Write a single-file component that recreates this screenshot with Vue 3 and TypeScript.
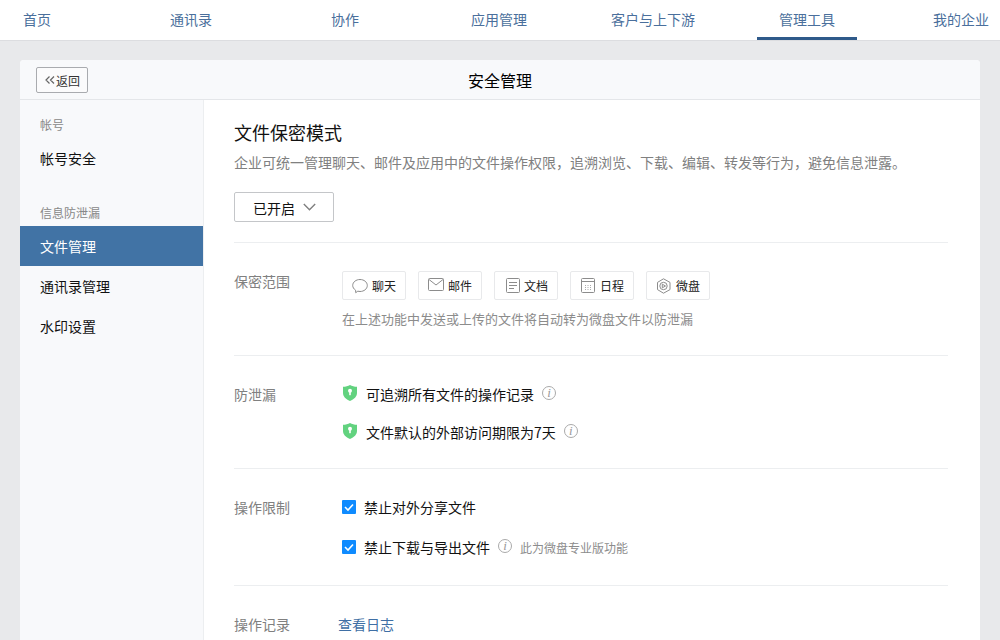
<script setup lang="ts">
const tabs: string[] = ['首页', '通讯录', '协作', '应用管理', '客户与上下游', '管理工具', '我的企业']
</script>

<template>
  <div class="page">
    <nav class="nav">
      <a v-for="t in tabs" :key="t" class="tab" :class="{ on: t === '管理工具' }">{{ t }}</a>
    </nav>
    <div class="card">
      <header class="head">
        <button class="back">
          <svg width="10" height="8" viewBox="0 0 10 8" fill="none" stroke="#666" stroke-width="1.200"><path d="M4.500 .5 1 4l3.500 3.500M9 .5 5.500 4 9 7.500" /></svg>
          <span>返回</span>
        </button>
        <h1>安全管理</h1>
      </header>
      <div class="body">
        <aside class="side">
          <div class="group">帐号</div>
          <div class="item first">帐号安全</div>
          <div class="group second">信息防泄漏</div>
          <div class="item active">文件管理</div>
          <div class="item">通讯录管理</div>
          <div class="item">水印设置</div>
        </aside>
        <main class="main">
          <section class="intro">
            <h2>文件保密模式</h2>
            <p>企业可统一管理聊天、邮件及应用中的文件操作权限，追溯浏览、下载、编辑、转发等行为，避免信息泄露。</p>
            <button class="select">
              <span>已开启</span>
              <svg width="13" height="8" viewBox="0 0 13 8" fill="none" stroke="#808080" stroke-width="1.400"><path d="M.8 1 6.500 6.700 12.200 1" /></svg>
            </button>
          </section>

          <section class="row scope">
            <div class="label">保密范围</div>
            <div class="col">
              <div class="chips">
                <span class="chip">
                  <svg width="16" height="16" viewBox="0 0 16 16" fill="none" stroke="#8c8c8c"><path d="M8 1.500c4 0 7.300 2.600 7.300 6s-3.300 6-7.300 6c-.8 0-1.500-.1-2.200-.3L3.700 14.700l-.1-2.500C1.800 11 .7 9.300.7 7.500c0-3.400 3.300-6 7.300-6z" /></svg>
                  聊天
                </span>
                <span class="chip">
                  <svg class="up" width="16" height="13" viewBox="0 0 16 13" fill="none" stroke="#8c8c8c"><rect x=".5" y=".5" width="15" height="12" rx="1" /><path d="m1 1.500 7 5.500 7-5.500" /></svg>
                  邮件
                </span>
                <span class="chip">
                  <svg width="14" height="15" viewBox="0 0 14 15" fill="none" stroke="#8c8c8c"><rect x=".5" y=".5" width="13" height="14" rx="1" /><path d="M3 4.500h8M3 7.500h8M3 10.500h5" /></svg>
                  文档
                </span>
                <span class="chip">
                  <svg width="15" height="15" viewBox="0 0 15 15" fill="none" stroke="#8c8c8c"><rect x=".5" y=".5" width="13" height="14" rx="1" /><path d="M.5 3.500h13" /><path d="M4 7.500h6M4 9.500h6M4 11.500h6" stroke="#aaa" stroke-dasharray="1 1.500" /></svg>
                  日程
                </span>
                <span class="chip">
                  <svg width="15" height="16" viewBox="0 0 15 16" fill="none" stroke="#8c8c8c"><path d="M6.500 .8 13 4.400v7.200l-6.500 3.600L.5 11.600V4.400z" stroke-linejoin="round" /><circle cx="6.500" cy="8" r="3.700" /><path d="M5.300 6.200 8.500 8l-3.200 1.800z" /></svg>
                  微盘
                </span>
              </div>
              <p class="hint">在上述功能中发送或上传的文件将自动转为微盘文件以防泄漏</p>
            </div>
          </section>

          <section class="row leak">
            <div class="label">防泄漏</div>
            <div class="col">
              <div class="line">
                <svg class="shield" width="14" height="16" viewBox="0 0 14 16"><path fill="#62d27f" d="M7 0c2 1.100 4.400 1.700 7 1.800v6.200c0 3.600-2.800 6.100-7 8-4.200-1.900-7-4.400-7-8V1.800C2.600 1.700 5 1.100 7 0z" /><circle cx="7" cy="5.800" r="2" fill="#fff" /><rect x="6.200" y="6.500" width="1.600" height="3.700" fill="#fff" /></svg>
                <span>可追溯所有文件的操作记录</span>
                <i class="info">i</i>
              </div>
              <div class="line">
                <svg class="shield" width="14" height="16" viewBox="0 0 14 16"><path fill="#62d27f" d="M7 0c2 1.100 4.400 1.700 7 1.800v6.200c0 3.600-2.800 6.100-7 8-4.200-1.900-7-4.400-7-8V1.800C2.600 1.700 5 1.100 7 0z" /><circle cx="7" cy="5.800" r="2" fill="#fff" /><rect x="6.200" y="6.500" width="1.600" height="3.700" fill="#fff" /></svg>
                <span>文件默认的外部访问期限为7天</span>
                <i class="info">i</i>
              </div>
            </div>
          </section>

          <section class="row limit">
            <div class="label">操作限制</div>
            <div class="col">
              <div class="check">
                <svg width="14" height="14" viewBox="0 0 14 14"><rect width="14" height="14" rx="1" fill="#0f8bff" /><path d="m3 7 3 3 5-5.500" fill="none" stroke="#fff" stroke-width="1.600" /></svg>
                <span>禁止对外分享文件</span>
              </div>
              <div class="check second">
                <svg width="14" height="14" viewBox="0 0 14 14"><rect width="14" height="14" rx="1" fill="#0f8bff" /><path d="m3 7 3 3 5-5.500" fill="none" stroke="#fff" stroke-width="1.600" /></svg>
                <span>禁止下载与导出文件</span>
                <i class="info">i</i>
                <small>此为微盘专业版功能</small>
              </div>
            </div>
          </section>

          <section class="row log">
            <div class="label">操作记录</div>
            <a class="link">查看日志</a>
          </section>
        </main>
      </div>
    </div>
  </div>
</template>

<style>
html, body { margin: 0; overflow: hidden; }
</style>

<style scoped>
.page {
  width: 1000px;
  height: 640px;
  overflow: hidden;
  background: #e8e9eb;
  font-family: "Noto Sans CJK SC", "Liberation Sans", sans-serif;
  font-size: 14px;
  color: #000;
}
.nav {
  display: flex;
  gap: 54px;
  height: 40px;
  margin-left: -13px;
  width: 1100px;
  background: #fff;
  box-shadow: 0 1px 0 #dcdde0;
  margin-bottom: 20px;
  position: relative;
}
.tab {
  width: 100px;
  height: 40px;
  box-sizing: border-box;
  text-align: center;
  line-height: 39px;
  color: #4a6f9c;
  flex: none;
}
.tab.on { border-bottom: 3px solid #2f5a8a; }
.card {
  margin: 0 20px;
  height: 600px;
  background: #fff;
  border-radius: 4px 4px 0 0;
  overflow: hidden;
}
.head {
  height: 40px;
  box-sizing: border-box;
  background: #f8f9fb;
  border-bottom: 1px solid #e4e6e9;
  display: flex;
  align-items: center;
  justify-content: center;
  position: relative;
}
.head h1 { margin: 0; font-size: 16px; font-weight: 400; line-height: 40px; }
.back {
  position: absolute;
  left: 16px;
  top: 7px;
  width: 52px;
  height: 26px;
  box-sizing: border-box;
  padding: 0 0 0 8px;
  display: flex;
  align-items: center;
  gap: 1px;
  background: #fbfbfc;
  border: 1px solid #a9abaf;
  border-radius: 2px;
  font: inherit;
  font-size: 12px;
  color: #333;
}
.body { display: flex; height: 560px; }
.side {
  width: 184px;
  box-sizing: border-box;
  flex: none;
  background: #f8f9fb;
  border-right: 1px solid #eceef0;
  padding-top: 15px;
}
.group { padding-left: 20px; height: 20px; line-height: 20px; font-size: 12px; color: #888; }
.group.second { margin-top: 24px; height: 24px; line-height: 22px; }
.item { padding-left: 20px; height: 40px; line-height: 40px; color: #111; }
.item.first { margin-top: 3px; }
.item.active { background: #4173a5; color: #fff; }
.main { flex: 1; padding: 0 32px 0 30px; min-width: 0; }
.intro { padding-top: 19px; height: 143px; box-sizing: border-box; border-bottom: 1px solid #eceef0; }
.intro h2 { margin: 0; font-size: 18px; font-weight: 400; line-height: 26px; color: #111; }
.intro p { margin: 6px 0 0; line-height: 22px; color: #808080; white-space: nowrap; }
.select {
  margin-top: 19px;
  width: 100px;
  height: 30px;
  box-sizing: border-box;
  display: flex;
  align-items: center;
  padding: 0 0 0 18px;
  gap: 8px;
  background: #fff;
  border: 1px solid #c4c6c9;
  border-radius: 2px;
  font: inherit;
  color: #111;
}
.select span { padding-top: 1px; }
.row { display: flex; border-bottom: 1px solid #eceef0; box-sizing: border-box; }
.label { width: 108px; flex: none; color: #808080; line-height: 22px; }
.scope .label { line-height: 20px; }
.col { flex: 1; min-width: 0; }
.scope { height: 113px; padding-top: 28px; }
.chips { display: flex; gap: 12px; }
.chip {
  width: 64px;
  height: 29px;
  box-sizing: border-box;
  display: flex;
  align-items: center;
  justify-content: flex-end;
  gap: 4px;
  padding-right: 9px;
  border: 1px solid #e8e9eb;
  border-radius: 2px;
  font-size: 12px;
  color: #222;
}
.chip .up { margin-top: -2px; }
.hint { margin: 9px 0 0; font-size: 13px; line-height: 20px; color: #8c8c8c; white-space: nowrap; }
.leak { height: 113px; padding-top: 27px; }
.line { display: flex; align-items: center; height: 22px; margin-bottom: 16px; color: #111; }
.shield { margin: 0 9px 0 1px; position: relative; top: -1px; }
.info {
  width: 12px;
  height: 12px;
  border: 1px solid #aaa;
  border-radius: 50%;
  font: italic 13px/12px "Liberation Serif", serif;
  color: #999;
  text-align: center;
  margin-left: 8px;
  position: relative;
  top: -1px;
  flex: none;
}
.limit { height: 117px; padding-top: 27px; }
.check { display: flex; align-items: center; height: 22px; gap: 8px; color: #111; }
.check.second { margin-top: 18px; }
.check .info { margin-left: 0; }
.check small { font-size: 12px; color: #8c8c8c; }
.log { border-bottom: 0; padding-top: 27px; }
.link { color: #3f6fa5; line-height: 22px; margin-left: -4px; }
</style>
